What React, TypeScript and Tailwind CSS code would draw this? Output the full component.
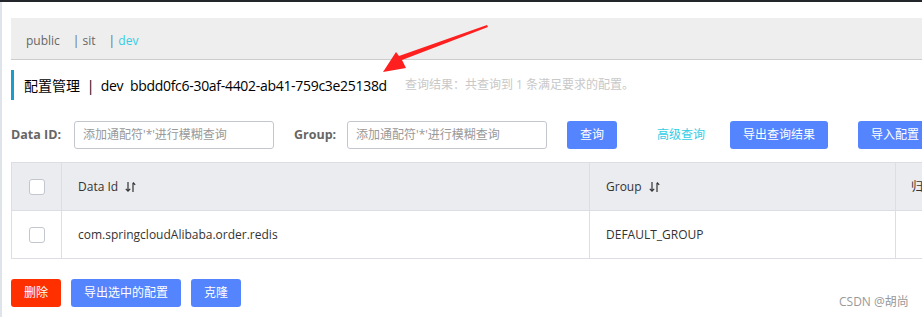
import React from 'react';

const font = { fontFamily: '"Open Sans", "Noto Sans CJK SC", sans-serif' };

function SortIcon() {
  return (
    <svg width="11" height="12" viewBox="0 0 11 12" className="ml-[7px] inline-block">
      <path d="M3 1v9M0.8 7.8L3 10.2L5.2 7.8" stroke="#333" strokeWidth="1.2" fill="none" />
      <path d="M8 11V2M8 1.5L10.2 3.8" stroke="#333" strokeWidth="1.2" fill="none" />
    </svg>
  );
}

function Checkbox() {
  return <div className="h-4 w-4 rounded-[3px] border border-[#c4c6cf] bg-white" />;
}

function BlueButton({ children, w }: { children: React.ReactNode; w: string }) {
  return (
    <button className={`flex h-7 shrink-0 ${w} items-center justify-center rounded-[3px] bg-[#5584ff] text-[12px] text-white`}>
      {children}
    </button>
  );
}

export default function App() {
  const placeholder = "添加通配符'*'进行模糊查询";
  return (
    <div className="relative h-[317px] w-[922px] overflow-hidden bg-white text-[12px] text-[#333]" style={font}>
      <div className="h-[2px] bg-[#23272b]" />
      <div className="flex h-[315px]">
        <div className="w-[2px] shrink-0 bg-[#dfe3ea]" />
        <div className="min-w-0 flex-1 pl-[9px]">
          {/* namespace tabs */}
          <div className="mt-[16px] flex h-[42px] items-center border-b border-[#cccccc] bg-[#eeeeee] pl-[15px] pt-[5px] text-[#666]">
            <span>public</span>
            <span className="ml-[13px]">| sit</span>
            <span className="ml-[13px] text-[#33cde5]"><span className="text-[#666]">| </span>dev</span>
          </div>

          {/* title */}
          <div className="mt-[10px] flex h-[30px] items-center whitespace-nowrap border-l-[3px] border-[#1e9bc9] pl-[10px]">
            <span className="text-[14px] text-[#000]">
              配置管理<span className="tracking-[-0.3px]">&nbsp;&nbsp;|&nbsp;&nbsp;dev&nbsp;&nbsp;bbdd0fc6-30af-4402-ab41-759c3e25138d</span>
            </span>
            <span className="ml-[18px] text-[12px] text-[#c8c8c8]">查询结果：共查询到 1 条满足要求的配置。</span>
          </div>

          {/* search row */}
          <div className="mt-[21px] flex h-7 items-center whitespace-nowrap">
            <span className="w-[63px] shrink-0 text-[12.5px] font-bold text-[#666]">Data ID:</span>
            <div className="flex h-7 w-[200px] shrink-0 items-center rounded-[3px] border border-[#c4c6cf] pl-[8px] text-[#999]">{placeholder}</div>
            <span className="ml-[20px] w-[53px] shrink-0 text-[12.5px] font-bold text-[#666]">Group:</span>
            <div className="flex h-7 w-[200px] shrink-0 items-center rounded-[3px] border border-[#c4c6cf] pl-[8px] text-[#999]">{placeholder}</div>
            <div className="ml-[20px] shrink-0"><BlueButton w="w-[50px]">查询</BlueButton></div>
            <span className="ml-[40px] shrink-0 text-[#33cde5]">高级查询</span>
            <div className="ml-[25px] shrink-0"><BlueButton w="w-[98px]">导出查询结果</BlueButton></div>
            <div className="ml-[30px] shrink-0"><BlueButton w="w-[74px]">导入配置</BlueButton></div>
          </div>

          {/* table */}
          <div className="mt-[13px] w-[1000px] border border-[#dcdee3]">
            <div className="flex h-[47px] items-center bg-[#ebecf0]">
              <div className="flex h-full w-[50px] items-center justify-center border-r border-[#dcdee3]"><Checkbox /></div>
              <div className="flex h-full w-[528px] items-center border-r border-[#dcdee3] pl-[16px]">Data Id<SortIcon /></div>
              <div className="flex h-full w-[306px] items-center border-r border-[#dcdee3] pl-[16px]">Group<SortIcon /></div>
              <div className="flex h-full items-center pl-[15px]">归属应用</div>
            </div>
            <div className="flex h-[48px] items-center border-t border-[#dcdee3] bg-white">
              <div className="flex h-full w-[50px] items-center justify-center border-r border-[#dcdee3]"><Checkbox /></div>
              <div className="flex h-full w-[528px] items-center border-r border-[#dcdee3] pl-[16px]">com.springcloudAlibaba.order.redis</div>
              <div className="flex h-full w-[306px] items-center border-r border-[#dcdee3] pl-[16px]">DEFAULT_GROUP</div>
              <div className="h-full" />
            </div>
          </div>

          {/* bottom actions */}
          <div className="mt-[20px] flex gap-[10px]">
            <button className="flex h-7 w-[50px] items-center justify-center rounded-[3px] bg-[#ff3000] text-white">删除</button>
            <BlueButton w="w-[110px]">导出选中的配置</BlueButton>
            <BlueButton w="w-[50px]">克隆</BlueButton>
          </div>
        </div>
      </div>

      <div className="absolute left-[839px] top-[293px] text-[12px] text-[#999]">CSDN @胡尚</div>

      <svg className="absolute left-0 top-0" width="922" height="317" viewBox="0 0 922 317" style={{ pointerEvents: 'none' }}>
        <polygon points="487,25 488,27 402,60 406,68 383,72 396,52 399,56" fill="#ff1f1f" />
      </svg>
    </div>
  );
}
